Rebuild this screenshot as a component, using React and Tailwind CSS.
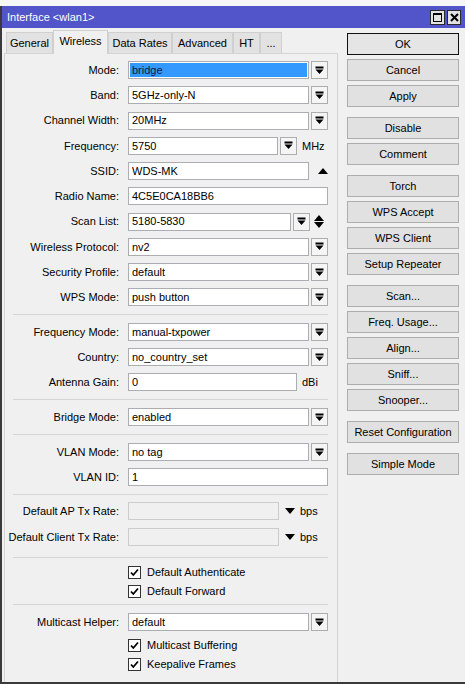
import React from "react";

// Winbox "Interface <wlan1>" window, Wireless tab

const DropIcon = () => (
    <svg width="9" height="9" viewBox="0 0 9 9">
        <rect x="0.5" y="0.5" width="8" height="2" fill="#000" />
        <path d="M0.5 3.5h8L4.5 8z" fill="#000" />
    </svg>
);

const DropBtn = () => (
    <div className="w-[17px] h-[18px] ml-[2px] border border-[#adadad] bg-[#f5f5f5] flex items-center justify-center">
        <DropIcon />
    </div>
);

const UpTri = () => (
    <svg width="10" height="6" viewBox="0 0 10 6">
        <path d="M0 6h10L5 0z" fill="#000" />
    </svg>
);

const DownTri = () => (
    <svg width="10" height="6" viewBox="0 0 10 6">
        <path d="M0 0h10L5 6z" fill="#000" />
    </svg>
);

const Input = ({ w, children, selected, disabled }) => (
    <div
        className={`h-[18px] border flex items-center ${disabled ? "bg-[#f0f0f0] border-[#cccccc]" : "bg-white border-[#abadb3]"} ${w}`}
    >
        {selected ? (
            <div className="flex-1 h-[14px] mx-[1px] bg-[#3399ff] flex items-center px-[2px] text-[#0b1a3a]">{children}</div>
        ) : (
            <span className="px-[3px]">{children}</span>
        )}
    </div>
);

const Row = ({ label, children, className = "" }) => (
    <div className={`flex items-center h-[18px] ${className}`}>
        <div className="w-[114px] text-right whitespace-nowrap">{label}</div>
        <div className="ml-[9px] flex items-center">{children}</div>
    </div>
);

const Combo = ({ label, value, selected, className }) => (
    <Row label={label} className={className}>
        <Input w="w-[181px]" selected={selected}>{value}</Input>
        <DropBtn />
    </Row>
);

const Sep = ({ className = "" }) => <div className={`ml-[8px] w-[315px] h-px bg-[#d5d5d5] ${className}`} />;

const Check = ({ label, className = "" }) => (
    <div className={`flex items-center h-[19px] pl-[123px] ${className}`}>
        <div className="w-[13px] h-[13px] border border-[#333333] bg-white flex items-center justify-center">
            <svg width="11" height="11" viewBox="0 0 11 11">
                <path d="M2 5.5L4.3 8L9 2.5" stroke="#000" strokeWidth="1.8" fill="none" />
            </svg>
        </div>
        <span className="ml-[6px] -mt-[2px]">{label}</span>
    </div>
);

const Btn = ({ children, primary }) => (
    <div
        className={`w-[112px] h-[22px] flex items-center justify-center border ${primary ? "border-[#111111] bg-[#e5e5e5]" : "border-[#adadad] bg-[#e1e1e1]"}`}
    >
        {children}
    </div>
);

const buttonGroups = [
    ["OK", "Cancel", "Apply"],
    ["Disable", "Comment"],
    ["Torch", "WPS Accept", "WPS Client", "Setup Repeater"],
    ["Scan...", "Freq. Usage...", "Align...", "Sniff...", "Snooper..."],
    ["Reset Configuration"],
    ["Simple Mode"],
];

const tabs = [
    { name: "General", w: "w-[47px]" },
    { name: "Wireless", w: "w-[55px]", active: true },
    { name: "Data Rates", w: "w-[64px]" },
    { name: "Advanced", w: "w-[61px]" },
    { name: "HT", w: "w-[27px]" },
    { name: "...", w: "w-[22px]" },
];

export default function App() {
    return (
        <div className="w-[465px] h-[684px] bg-[#f3f3f3] text-[11px] text-black overflow-hidden" style={{ fontFamily: '"Liberation Sans", Arial, sans-serif' }}>
            <div className="h-[6px] bg-[#f7f7f7]" />
            {/* Window frame */}
            <div className="h-[678px] border-l-2 border-b-2 border-[#3a3a3a] bg-[#f0f0f0] flex flex-col">
                {/* Title bar */}
                <div className="h-[22px] bg-[#5254c9] flex items-center pl-[5px] pr-[4px]">
                    <span className="text-white text-[11px]">Interface &lt;wlan1&gt;</span>
                    <div className="ml-auto flex items-center gap-[2px]">
                        <div className="w-[15px] h-[15px] border border-[#2a2a2a] bg-[#e3e3e3] flex items-center justify-center">
                            <div className="w-[9px] h-[9px] border border-[#000] border-t-2" />
                        </div>
                        <div className="w-[14px] h-[15px] border border-[#2a2a2a] bg-[#e3e3e3] flex items-center justify-center">
                            <svg width="9" height="9" viewBox="0 0 9 9">
                                <path d="M1 1L8 8M8 1L1 8" stroke="#000" strokeWidth="2" />
                            </svg>
                        </div>
                    </div>
                </div>

                <div className="flex flex-1">
                    {/* Left: tabs + panel */}
                    <div className="ml-[2px] w-[334px] flex flex-col">
                        <div className="h-[25px] flex items-end pl-[2px]">
                            {tabs.map((t) => (
                                <div
                                    key={t.name}
                                    className={`${t.w} flex items-center justify-center border-t border-l border-r border-[#d0d0d0] ${t.active ? "h-[24px] bg-[#f0f0f0] pb-[2px] -mb-px relative z-10" : "h-[21px] bg-[#e2e2e2]"}`}
                                >
                                    {t.name}
                                </div>
                            ))}
                        </div>
                        <div className="flex-1 border border-b-0 border-[#d5d5d5] bg-[#f0f0f0] pt-[7px]">
                            <div className="flex flex-col gap-[7.25px]">
                                <Combo label="Mode:" value="bridge" selected />
                                <Combo label="Band:" value="5GHz-only-N" />
                                <Combo label="Channel Width:" value="20MHz" />
                                <Row label="Frequency:">
                                    <Input w="w-[150px]">5750</Input>
                                    <DropBtn />
                                    <span className="ml-[5px]">MHz</span>
                                </Row>
                                <Row label="SSID:">
                                    <Input w="w-[181px]">WDS-MK</Input>
                                    <div className="w-[19px] flex justify-end">
                                        <UpTri />
                                    </div>
                                </Row>
                                <Row label="Radio Name:">
                                    <Input w="w-[200px]">4C5E0CA18BB6</Input>
                                </Row>
                                <Row label="Scan List:">
                                    <Input w="w-[163px]">5180-5830</Input>
                                    <DropBtn />
                                    <div className="ml-[4px] flex flex-col gap-[1px]">
                                        <UpTri />
                                        <DownTri />
                                    </div>
                                </Row>
                                <Combo label="Wireless Protocol:" value="nv2" />
                                <Combo label="Security Profile:" value="default" />
                                <Combo label="WPS Mode:" value="push button" />
                            </div>

                            <Sep className="mt-[8px]" />

                            <div className="mt-[8px] flex flex-col gap-[7px]">
                                <Combo label="Frequency Mode:" value="manual-txpower" />
                                <Combo label="Country:" value="no_country_set" />
                                <Row label="Antenna Gain:">
                                    <Input w="w-[169px]">0</Input>
                                    <span className="ml-[5px]">dBi</span>
                                </Row>
                            </div>

                            <Sep className="mt-[8px]" />
                            <Combo label="Bridge Mode:" value="enabled" className="mt-[8px]" />
                            <Sep className="mt-[8px]" />

                            <div className="mt-[8px] flex flex-col gap-[7px]">
                                <Combo label="VLAN Mode:" value="no tag" />
                                <Row label="VLAN ID:">
                                    <Input w="w-[200px]">1</Input>
                                </Row>
                            </div>

                            <Sep className="mt-[8px]" />

                            <div className="mt-[7px] flex flex-col gap-[8px]">
                                <Row label="Default AP Tx Rate:">
                                    <Input w="w-[151px]" disabled />
                                    <div className="ml-[6px]">
                                        <DownTri />
                                    </div>
                                    <span className="ml-[5px]">bps</span>
                                </Row>
                                <Row label="Default Client Tx Rate:">
                                    <Input w="w-[151px]" disabled />
                                    <div className="ml-[6px]">
                                        <DownTri />
                                    </div>
                                    <span className="ml-[5px]">bps</span>
                                </Row>
                            </div>

                            <Sep className="mt-[11px]" />
                            <Check label="Default Authenticate" className="mt-[5px]" />
                            <Check label="Default Forward" />
                            <Sep className="mt-[3px]" />

                            <Combo label="Multicast Helper:" value="default" className="mt-[8px]" />
                            <Check label="Multicast Buffering" className="mt-[5px]" />
                            <Check label="Keepalive Frames" />
                        </div>
                    </div>

                    {/* Right: buttons */}
                    <div className="ml-[9px] pt-[5px] flex flex-col gap-[10px]">
                        {buttonGroups.map((group, i) => (
                            <div key={i} className="flex flex-col gap-[4px]">
                                {group.map((label) => (
                                    <Btn key={label} primary={label === "OK"}>
                                        {label}
                                    </Btn>
                                ))}
                            </div>
                        ))}
                    </div>
                </div>
            </div>
        </div>
    );
}
